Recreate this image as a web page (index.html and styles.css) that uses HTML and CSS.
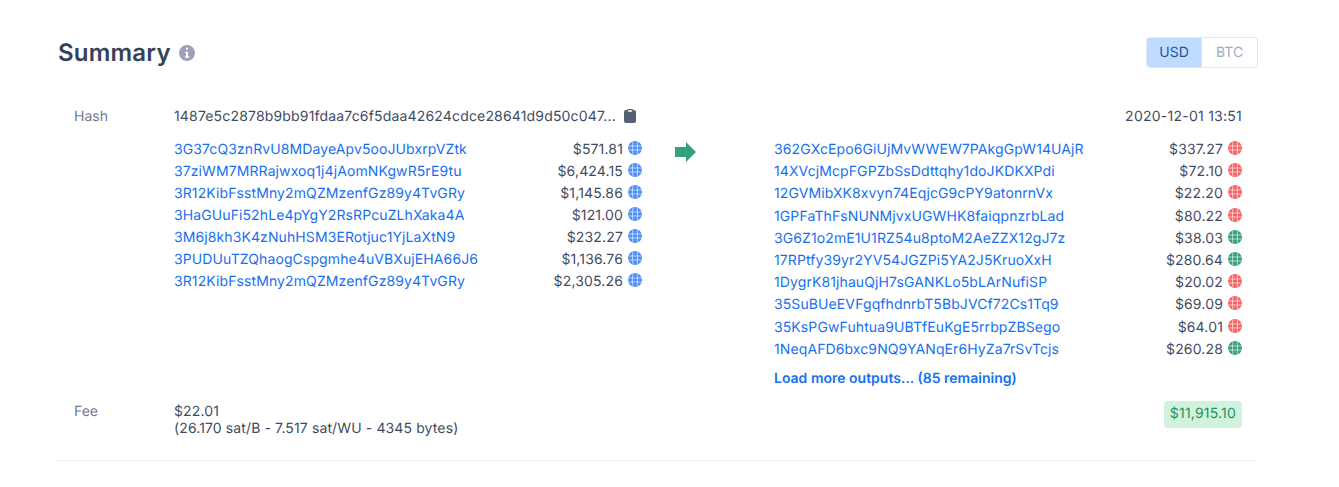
FILE: index.html
```html
<!DOCTYPE html>
<html lang="en">
<head>
<meta charset="utf-8">
<title>Summary</title>
<link rel="stylesheet" href="styles.css">
</head>
<body>
<svg class="defs" width="0" height="0" aria-hidden="true">
  <symbol id="globe" viewBox="0 0 14 14">
    <circle cx="7" cy="7" r="7"/>
    <path class="grid" d="M.5 5h13M.5 9h13M5 .6C4.300 4.500 4.300 9.500 5 13.400M9 .6c.7 3.900.7 8.900 0 12.800"/>
  </symbol>
</svg>
<main class="summary">
  <header class="head">
    <h2 class="title">Summary
      <svg class="info" viewBox="2 2 16 16"><path fill-rule="evenodd" clip-rule="evenodd" d="M10 2a8 8 0 1 0 0 16 8 8 0 0 0 0-16Zm1.200 3.600a1.200 1.200 0 1 1-2.400 0 1.200 1.200 0 0 1 2.400 0ZM8 8.800h3v4.400h1v1.500H8v-1.500h1v-2.900H8V8.800Z"/></svg>
    </h2>
    <div class="toggle"><span class="opt active">USD</span><span class="opt">BTC</span></div>
  </header>

  <section class="row hash-row">
    <div class="label">Hash</div>
    <div class="hash">1487e5c2878b9bb91fdaa7c6f5daa42624cdce28641d9d50c047...
      <svg class="clip" viewBox="0 0 12 14"><path fill-rule="evenodd" d="M4 0a1 1 0 0 0-1 1H2a2 2 0 0 0-2 2v9a2 2 0 0 0 2 2h8a2 2 0 0 0 2-2V3a2 2 0 0 0-2-2H9a1 1 0 0 0-1-1H4Zm0 1.200h4v1.600H4V1.200Z"/></svg>
    </div>
    <div class="date">2020-12-01 13:51</div>
  </section>

  <section class="flow">
    <div class="col">
      <div class="io"><a>3G37cQ3znRvU8MDayeApv5ooJUbxrpVZtk</a><span class="amt">$571.81</span><svg class="g blue"><use href="#globe"/></svg></div>
      <div class="io"><a>37ziWM7MRRajwxoq1j4jAomNKgwR5rE9tu</a><span class="amt">$6,424.15</span><svg class="g blue"><use href="#globe"/></svg></div>
      <div class="io"><a>3R12KibFsstMny2mQZMzenfGz89y4TvGRy</a><span class="amt">$1,145.86</span><svg class="g blue"><use href="#globe"/></svg></div>
      <div class="io"><a>3HaGUuFi52hLe4pYgY2RsRPcuZLhXaka4A</a><span class="amt">$121.00</span><svg class="g blue"><use href="#globe"/></svg></div>
      <div class="io"><a>3M6j8kh3K4zNuhHSM3ERotjuc1YjLaXtN9</a><span class="amt">$232.27</span><svg class="g blue"><use href="#globe"/></svg></div>
      <div class="io"><a>3PUDUuTZQhaogCspgmhe4uVBXujEHA66J6</a><span class="amt">$1,136.76</span><svg class="g blue"><use href="#globe"/></svg></div>
      <div class="io"><a>3R12KibFsstMny2mQZMzenfGz89y4TvGRy</a><span class="amt">$2,305.26</span><svg class="g blue"><use href="#globe"/></svg></div>
    </div>
    <div class="arrow-col">
      <svg class="arrow" viewBox="0 0 22 20"><path d="M0 5h11V0l10 10-10 10v-5H0Z"/></svg>
    </div>
    <div class="col outputs">
      <div class="io"><a>362GXcEpo6GiUjMvWWEW7PAkgGpW14UAjR</a><span class="amt">$337.27</span><svg class="g red"><use href="#globe"/></svg></div>
      <div class="io"><a>14XVcjMcpFGPZbSsDdttqhy1doJKDKXPdi</a><span class="amt">$72.10</span><svg class="g red"><use href="#globe"/></svg></div>
      <div class="io"><a>12GVMibXK8xvyn74EqjcG9cPY9atonrnVx</a><span class="amt">$22.20</span><svg class="g red"><use href="#globe"/></svg></div>
      <div class="io"><a>1GPFaThFsNUNMjvxUGWHK8faiqpnzrbLad</a><span class="amt">$80.22</span><svg class="g red"><use href="#globe"/></svg></div>
      <div class="io"><a>3G6Z1o2mE1U1RZ54u8ptoM2AeZZX12gJ7z</a><span class="amt">$38.03</span><svg class="g green"><use href="#globe"/></svg></div>
      <div class="io"><a>17RPtfy39yr2YV54JGZPi5YA2J5KruoXxH</a><span class="amt">$280.64</span><svg class="g green"><use href="#globe"/></svg></div>
      <div class="io"><a>1DygrK81jhauQjH7sGANKLo5bLArNufiSP</a><span class="amt">$20.02</span><svg class="g red"><use href="#globe"/></svg></div>
      <div class="io"><a>35SuBUeEVFgqfhdnrbT5BbJVCf72Cs1Tq9</a><span class="amt">$69.09</span><svg class="g red"><use href="#globe"/></svg></div>
      <div class="io"><a>35KsPGwFuhtua9UBTfEuKgE5rrbpZBSego</a><span class="amt">$64.01</span><svg class="g red"><use href="#globe"/></svg></div>
      <div class="io"><a>1NeqAFD6bxc9NQ9YANqEr6HyZa7rSvTcjs</a><span class="amt">$260.28</span><svg class="g green"><use href="#globe"/></svg></div>
      <a class="more">Load more outputs... (85 remaining)</a>
    </div>
  </section>

  <section class="row fee-row">
    <div class="label">Fee</div>
    <div class="fee">$22.01<br>(26.170 sat/B - 7.517 sat/WU - 4345 bytes)</div>
    <div class="total">$11,915.10</div>
  </section>
</main>
</body>
</html>
```
FILE: styles.css
```css
* { box-sizing: border-box; }
html, body { margin: 0; background: #fff; }
body {
  font-family: Inter, "Liberation Sans", sans-serif;
  font-size: 14px;
  line-height: 20px;
  text-rendering: geometricPrecision;
  color: #3f4b61;
  height: 487px;
  overflow: hidden;
}
.defs { position: absolute; }
.summary {
  width: 1200px;
  margin-left: 58px;
  padding-top: 37px;
  padding-bottom: 23px;
  border-bottom: 1px solid #edf0f4;
}
.head {
  display: flex;
  justify-content: space-between;
  align-items: center;
  height: 31px;
}
.title {
  margin: 0;
  font-size: 24px;
  line-height: 31px;
  font-weight: 600;
  letter-spacing: .2px;
  color: #374259;
  display: flex;
  align-items: center;
  gap: 8px;
}
.info { width: 16px; height: 16px; fill: #9ca3b8; }
.toggle {
  display: flex;
  height: 31px;
  border: 1px solid #e5e7eb;
  border-radius: 4px;
  overflow: hidden;
}
.opt {
  width: 55px;
  display: flex;
  align-items: center;
  justify-content: center;
  color: #a0aec0;
}
.opt.active {
  background: #bfdbfe;
  color: #2a4f9c;
  border-right: 1px solid #d6e4f5;
}
.row { display: flex; padding: 0 16px; }
.label { width: 100px; color: #717b8f; flex: none; }
.hash-row { margin-top: 39px; height: 20px; }
.hash { flex: 1; display: flex; align-items: center; gap: 8px; letter-spacing: .17px; }
.clip { width: 12px; height: 14px; fill: #566074; position: relative; top: -1px; }
.date { text-align: right; letter-spacing: .25px; }
.flow {
  display: grid;
  grid-template-columns: 468px 132px 468px;
  margin: 12px 0 0 116px;
}
.col { display: flex; flex-direction: column; }
.io {
  display: flex;
  align-items: center;
  height: 22px;
}
.outputs .io { height: 22.2px; }
.io a { color: #1670ee; flex: 1; letter-spacing: .1px; }
.amt { text-align: right; letter-spacing: .15px; }
.g { width: 14px; height: 14px; margin-left: 5px; position: relative; top: -2px; }
.blue { fill: #4f8ff7; }
.red { fill: #f56565; }
.green { fill: #38a07a; }
.grid { fill: none; stroke: #fff; stroke-opacity: .6; stroke-width: 1; }
.arrow-col { padding: 3px 0 0 33px; }
.arrow { width: 22px; height: 20px; fill: #33a27c; display: block; }
.more {
  color: #1670ee;
  font-weight: 600;
  margin-top: 8px;
  height: 20px;
}
.fee-row { margin-top: 14px; align-items: flex-start; }
.fee-row .label { line-height: 18px; }
.fee { flex: 1; line-height: 17px; letter-spacing: .12px; }
.total {
  background: #d1f2dd;
  color: #1f9160;
  padding: 3px 6px;
  border-radius: 4px;
  height: 27px;
  margin-top: -1.5px;
  letter-spacing: .2px;
}
```
